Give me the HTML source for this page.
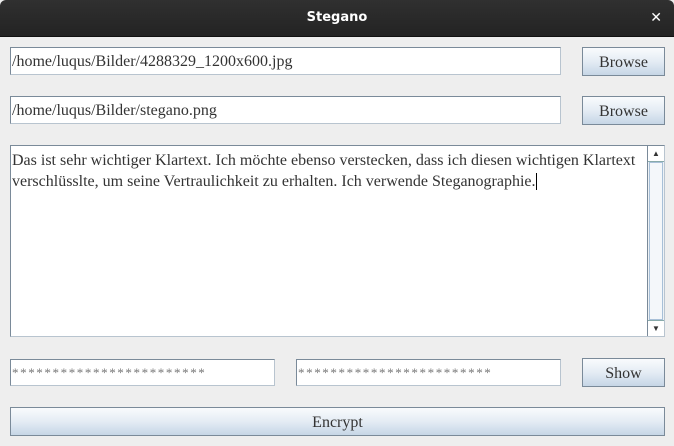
<!DOCTYPE html>
<html><head><meta charset="utf-8"><style>
*{box-sizing:border-box;margin:0;padding:0}
body{width:674px;height:446px;background:#eeeeee;position:relative;overflow:hidden;font-family:"Liberation Serif",serif;font-size:16px;color:#333}
.title{position:absolute;left:0;top:0;width:674px;height:37px;background:linear-gradient(#303030,#232323);border-radius:6px 6px 0 0;border-bottom:1px solid #111;color:#fff;font-family:"DejaVu Sans",sans-serif;font-weight:bold;font-size:13px;text-align:center;line-height:36px}
.x{position:absolute;right:12px;top:0;font-size:14px}
.f{position:absolute;background:#fff;border:1px solid #7a8a99;border-bottom-color:#b8c4cf;border-right-color:#b8c4cf;padding-left:1px;line-height:28px;white-space:nowrap;overflow:hidden}
.b{position:absolute;border:1px solid #7a8a99;background:linear-gradient(#f9fbfd,#e4ecf4 50%,#c6d6e6);text-align:center;line-height:29px}
.pw{color:#777;font-size:13px;letter-spacing:1.6px;line-height:26px}
</style></head><body>
<div class="title">Stegano<span class="x">✕</span></div>
<div class="f" style="left:10px;top:47px;width:551px;height:28px">/home/luqus/Bilder/4288329_1200x600.jpg</div>
<div class="b" style="left:582px;top:47px;width:83px;height:29px">Browse</div>
<div class="f" style="left:10px;top:96px;width:551px;height:28px">/home/luqus/Bilder/stegano.png</div>
<div class="b" style="left:582px;top:96px;width:83px;height:29px">Browse</div>
<div class="f" style="left:10px;top:145px;width:655px;height:192px;line-height:21px;white-space:nowrap;padding:4px 0 0 1px"><div>Das ist sehr wichtiger Klartext. Ich möchte ebenso verstecken, dass ich diesen wichtigen Klartext</div><div>verschlüsslte, um seine Vertraulichkeit zu erhalten. Ich verwende Steganographie.<span style="border-left:1px solid #000"></span></div></div>
<div style="position:absolute;left:647px;top:146px;width:17px;height:190px;background:#eef2f6;border-left:1px solid #7a8a99">
<div style="height:16px;background:#fff;border-bottom:1px solid #8aa;font-size:8px;text-align:center;line-height:15px">▲</div>
<div style="position:absolute;top:16px;left:1px;right:1px;bottom:16px;border:1px solid #a8c0d8;background:#f4f7fa"></div>
<div style="position:absolute;bottom:0;width:16px;height:16px;background:#fff;border-top:1px solid #8aa;font-size:8px;text-align:center;line-height:15px">▼</div></div>
<div class="f pw" style="left:10px;top:359px;width:265px;height:27px">************************</div>
<div class="f pw" style="left:296px;top:359px;width:265px;height:27px">************************</div>
<div class="b" style="left:582px;top:358px;width:83px;height:29px">Show</div>
<div class="b" style="left:10px;top:407px;width:655px;height:29px">Encrypt</div>
</body></html>
